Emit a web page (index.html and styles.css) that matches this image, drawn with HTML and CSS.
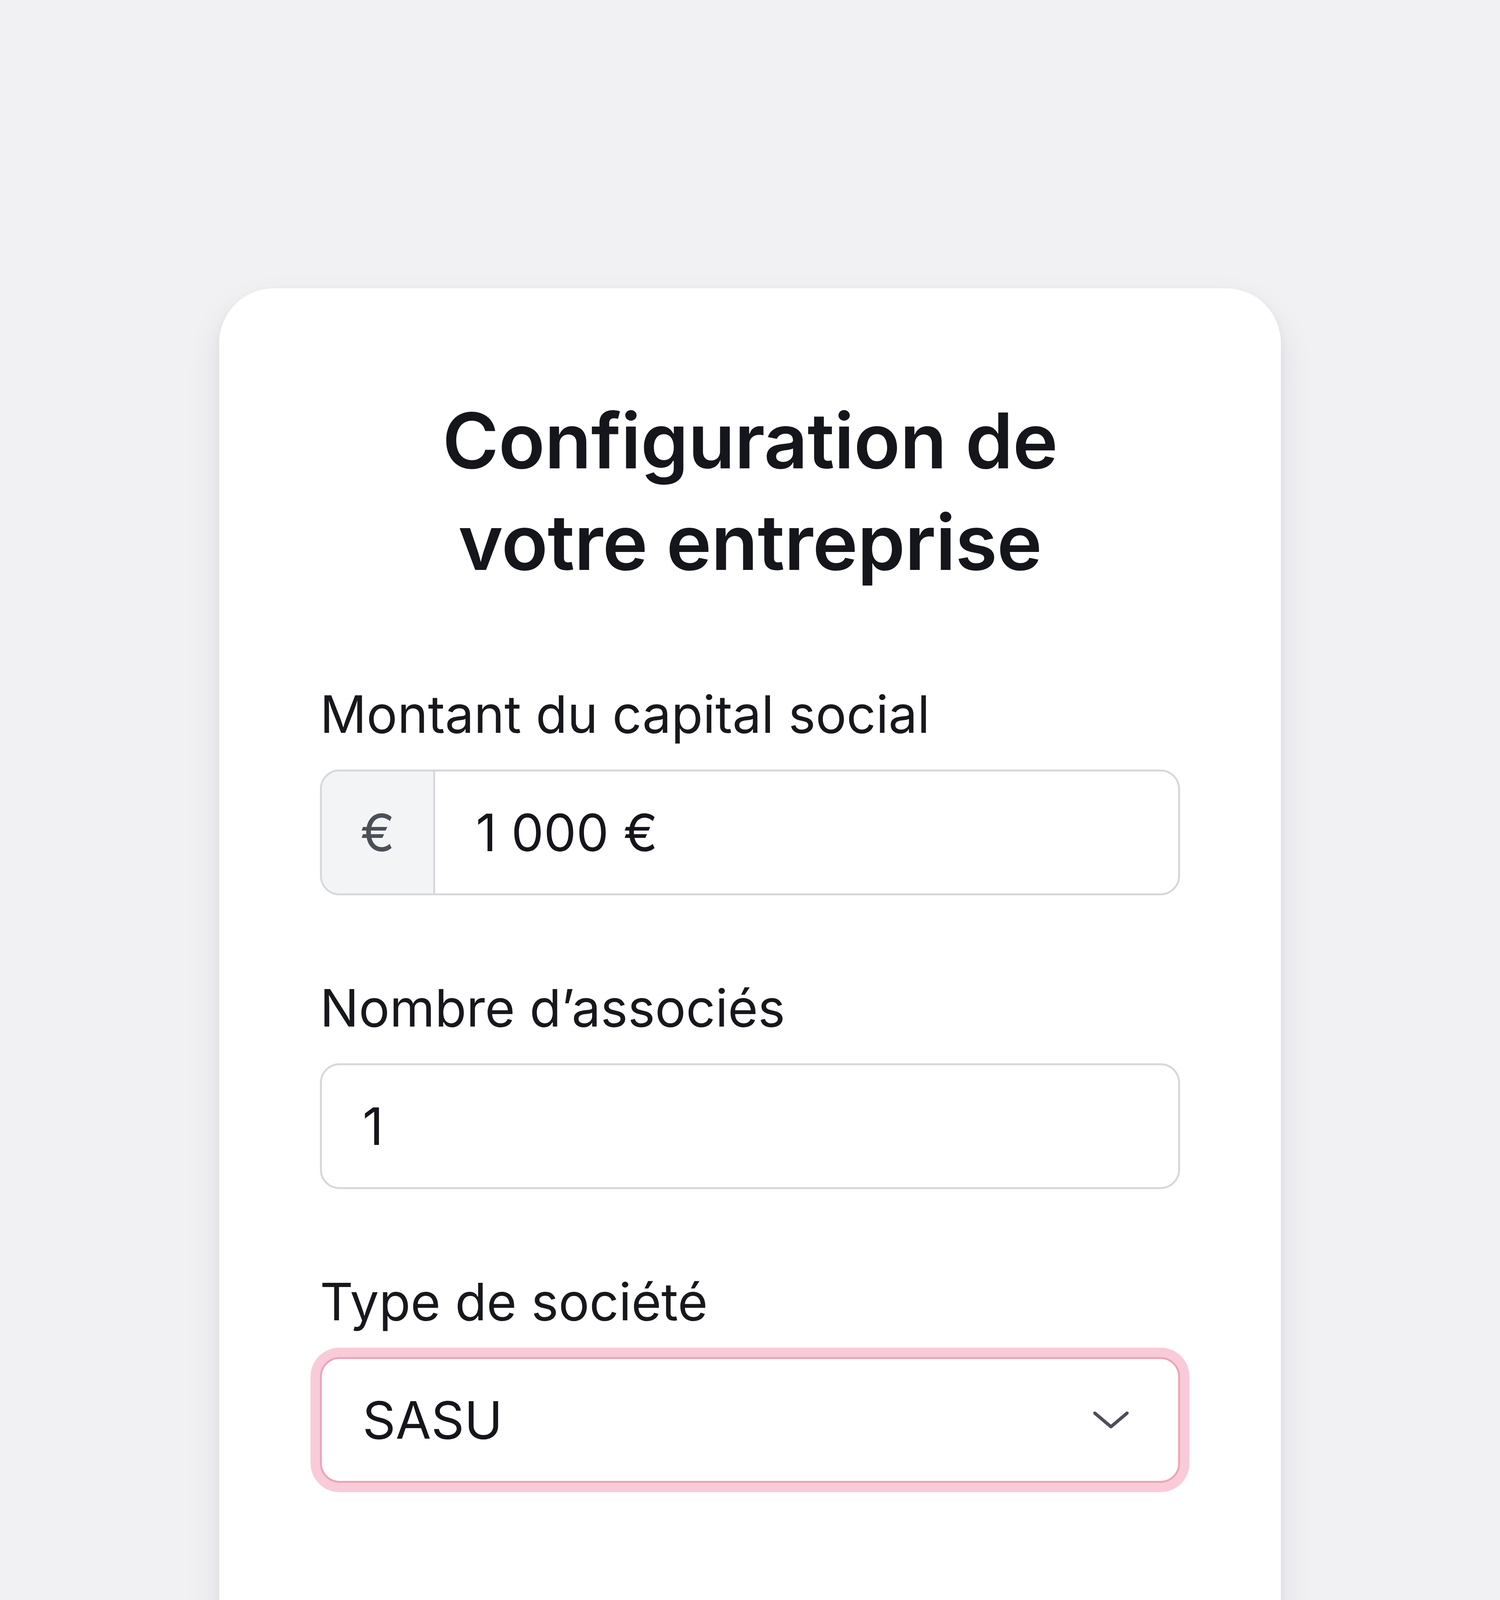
FILE: index.html
```html
<!DOCTYPE html>
<html lang="fr">
<head>
  <meta charset="UTF-8">
  <title>Configuration de votre entreprise</title>
  <link rel="stylesheet" href="styles.css">
</head>
<body>

  <div class="card">
    <h1>Configuration de<br>votre entreprise</h1>

    <form class="form">
      <div class="field">
        <label for="capital">Montant du capital social</label>
        <div class="input-group">
          <span class="prefix">€</span>
          <input id="capital" type="text" value="1 000 €">
        </div>
      </div>

      <div class="field">
        <label for="associes">Nombre d’associés</label>
        <div class="input-group">
          <input id="associes" type="text" value="1">
        </div>
      </div>

      <div class="field">
        <label for="type">Type de société</label>
        <div class="select focus" id="type">
          <span>SASU</span>
          <svg class="chevron" viewBox="0 0 100 50" width="92" height="46">
            <path d="M5 6 L50 44 L95 6" fill="none" stroke="#4b4f58" stroke-width="9" stroke-linecap="round" stroke-linejoin="round"/>
          </svg>
        </div>
      </div>
    </form>
  </div>

  <svg class="sparkle" viewBox="0 0 100 100" width="190" height="190">
    <path d="M50 0 C53 35 65 47 100 50 C65 53 53 65 50 100 C47 65 35 53 0 50 C35 47 47 35 50 0 Z" fill="#ffffff"/>
  </svg>

</body>
</html>
```

FILE: styles.css
```css
html {
  background-color: #f1f1f4;
}
body {
  margin: 0;
  background-color: #f1f1f4;
  font-family: Inter, "Noto Sans", sans-serif;
  color: #15161c;
  display: flex;
  justify-content: center;
  align-items: flex-start;
  padding-top: 738px;
  position: relative;
}
.card {
  width: 2718px;
  box-sizing: border-box;
  padding: 260px 258px 608px;
  background-color: #ffffff;
  border-radius: 140px;
  box-shadow: 0 40px 90px rgba(30, 35, 50, 0.09), 0 10px 24px rgba(30, 35, 50, 0.05);
}
h1 {
  margin: 0 0 218px;
  text-align: center;
  font-size: 196px;
  line-height: 260px;
  font-weight: 600;
  letter-spacing: -1px;
}
.form {
  display: flex;
  flex-direction: column;
  gap: 196px;
}
label {
  display: block;
  font-size: 132px;
  line-height: 185px;
  margin-bottom: 49px;
  color: #17181c;
}
.input-group {
  display: flex;
  height: 322px;
  box-sizing: border-box;
  border: 5px solid #d6d8dc;
  border-radius: 50px;
  overflow: hidden;
  background-color: #ffffff;
}
.prefix {
  width: 285px;
  flex-shrink: 0;
  display: flex;
  align-items: center;
  justify-content: center;
  background-color: #f3f4f6;
  border-right: 5px solid #d6d8dc;
  font-size: 132px;
  color: #4b4f58;
}
.input-group input {
  flex: 1;
  min-width: 0;
  border: none;
  outline: none;
  background: transparent;
  font-family: inherit;
  font-size: 132px;
  color: #15161c;
  padding: 0 0 0 104px;
}
.select {
  display: flex;
  align-items: center;
  justify-content: space-between;
  height: 322px;
  box-sizing: border-box;
  padding: 0 126px 0 104px;
  border: 5px solid #eea4b9;
  border-radius: 50px;
  font-size: 132px;
  color: #15161c;
  background-color: #ffffff;
}
.select.focus {
  box-shadow: 0 0 0 24px #f9cbd8;
}
.sparkle {
  position: absolute;
  left: 3227px;
  top: 4535px;
  opacity: 0.45;
}
```
